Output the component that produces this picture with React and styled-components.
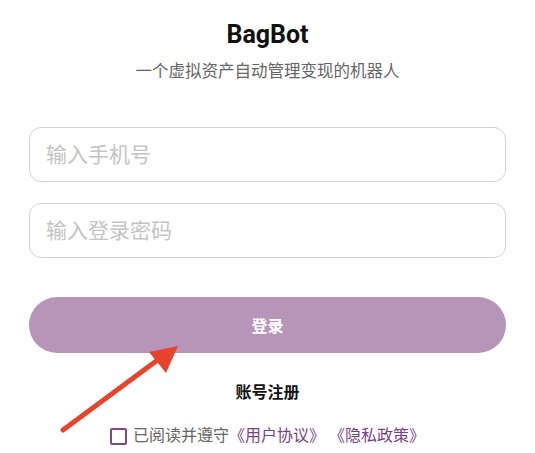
import React from 'react'
import styled, { createGlobalStyle } from 'styled-components'

const GlobalStyle = createGlobalStyle`
  html, body {
    margin: 0;
    padding: 0;
    background: #fff;
  }
  body {
    font-family: Roboto, "Noto Sans CJK SC", sans-serif;
  }
`

const Page = styled.div`
  position: relative;
  width: 535px;
  height: 453px;
  padding: 20px 29px 0;
  box-sizing: border-box;
  display: flex;
  flex-direction: column;
  overflow: hidden;
`

const Title = styled.h1`
  margin: 0;
  font-size: 25px;
  line-height: 30px;
  font-weight: 700;
  color: #111;
  text-align: center;
`

const Subtitle = styled.p`
  margin: 11px 0 0;
  font-size: 16.5px;
  line-height: 22px;
  color: #666;
  text-align: center;
`

const Form = styled.div`
  margin-top: 44px;
  display: flex;
  flex-direction: column;
  gap: 21px;
`

const Input = styled.input`
  height: 55px;
  box-sizing: border-box;
  border: 1px solid #d2d2d2;
  border-radius: 12px;
  padding: 0 16px;
  font-family: Roboto, "Noto Sans CJK SC", sans-serif;
  font-size: 21px;
  color: #333;
  outline: none;
  &::placeholder {
    color: #c4c4c4;
  }
`

const LoginButton = styled.button`
  margin-top: 39px;
  height: 56px;
  border: none;
  border-radius: 28px;
  background: #b795b8;
  color: #fff;
  font-family: Roboto, "Noto Sans CJK SC", sans-serif;
  font-size: 16px;
  font-weight: 700;
  cursor: pointer;
`

const Register = styled.div`
  margin-top: 30px;
  font-size: 16px;
  line-height: 20px;
  font-weight: 700;
  color: #111;
  text-align: center;
`

const Agreement = styled.label`
  margin-top: 23px;
  display: flex;
  align-items: center;
  justify-content: center;
  gap: 6px;
  font-size: 16px;
  line-height: 20px;
  color: #666;
`

const Check = styled.span`
  width: 13px;
  height: 13px;
  border: 2px solid #7d4a88;
  border-radius: 2px;
`

const Link = styled.span`
  color: #7a3f8a;
`

const Arrow = styled.svg`
  position: absolute;
  left: 0;
  top: 0;
  pointer-events: none;
`

export default function App() {
  return (
    <Page>
      <GlobalStyle />
      <Title>BagBot</Title>
      <Subtitle>一个虚拟资产自动管理变现的机器人</Subtitle>
      <Form>
        <Input placeholder="输入手机号" />
        <Input type="password" placeholder="输入登录密码" />
      </Form>
      <LoginButton>登录</LoginButton>
      <Register>账号注册</Register>
      <Agreement>
        <Check />
        <span>
          已阅读并遵守<Link>《用户协议》</Link> <Link>《隐私政策》</Link>
        </span>
      </Agreement>
      {/* annotation arrow */}
      <Arrow width="535" height="453" viewBox="0 0 535 453">
        <line x1="63" y1="430" x2="163" y2="356" stroke="#e8432d" strokeWidth="5" strokeLinecap="round" />
        <polygon points="178,346 149,352 166,373" fill="#e8432d" />
      </Arrow>
    </Page>
  )
}
